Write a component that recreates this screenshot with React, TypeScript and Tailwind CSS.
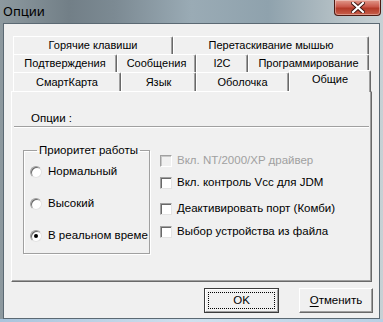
import React from 'react';

const font = "font-['Liberation_Sans',Arial,sans-serif]";

function Tab({ label, w, selected = false }: { label: string; w: number; selected?: boolean }) {
  return (
    <div
      style={{ width: w }}
      className={
        selected
          ? 'relative z-10 h-[22px] -mb-px flex items-start justify-center pt-[3px] bg-[#f0f0f0] border-t border-l border-white border-r border-r-[#696969] shadow-[inset_-1px_0_0_#a0a0a0] rounded-tr-[2px]'
          : 'h-full flex items-center justify-center bg-[#f0f0f0] border-t border-l border-white border-r border-r-[#696969] shadow-[inset_-1px_0_0_#a0a0a0] rounded-tr-[2px]'
      }
    >
      <span className="text-[11px] text-black leading-none">{label}</span>
    </div>
  );
}

function Radio({ label, checked = false }: { label: string; checked?: boolean }) {
  return (
    <div className="flex items-center h-[14px]">
      <span className="shrink-0 w-[12px] h-[12px] rounded-full bg-white border border-t-[#a0a0a0] border-l-[#a0a0a0] border-r-[#e3e3e3] border-b-[#e3e3e3] shadow-[inset_1px_1px_0_#696969] flex items-center justify-center">
        {checked && <span className="w-[4px] h-[4px] rounded-full bg-black" />}
      </span>
      <span className="ml-[6px] text-[11.5px] text-black whitespace-nowrap">{label}</span>
    </div>
  );
}

function Check({ label, disabled = false }: { label: string; disabled?: boolean }) {
  return (
    <div className="flex items-center h-[14px]">
      <span
        className={
          disabled
            ? 'shrink-0 w-[12px] h-[12px] bg-[#f0f0f0] border border-t-[#a0a0a0] border-l-[#a0a0a0] border-r-white border-b-white shadow-[inset_1px_1px_0_#c8c8c8]'
            : 'shrink-0 w-[12px] h-[12px] bg-white border border-t-[#a0a0a0] border-l-[#a0a0a0] border-r-[#e3e3e3] border-b-[#e3e3e3] shadow-[inset_1px_1px_0_#696969]'
        }
      />
      <span className={'ml-[5px] text-[11.5px] whitespace-nowrap ' + (disabled ? 'text-[#a0a0a0]' : 'text-black')}>
        {label}
      </span>
    </div>
  );
}

export default function App() {
  return (
    <div
      className={
        font +
        ' w-[383px] h-[322px] overflow-hidden flex flex-col bg-[linear-gradient(90deg,#8d999f_0%,#727f87_18%,#7c8a93_30%,#9aabb5_50%,#8fa2ad_70%,#b4c0c5_88%,#c7d1d5_100%)]'
      }
    >
      {/* title bar */}
      <div className="h-[23px] flex items-start justify-between shrink-0">
        <span className="ml-[3px] mt-[3px] text-[13px] leading-[16px] text-black font-['Noto_Sans',sans-serif]">
          Опции
        </span>
        <div className="mr-[2px] w-[47px] h-[16px] rounded-b-[4px] border border-t-0 border-[#4d1a12] bg-[linear-gradient(180deg,#e29a8c_0%,#c9584a_45%,#b33a28_55%,#c8604c_100%)] shadow-[inset_0_0_0_1px_rgba(255,255,255,0.35)] flex items-center justify-center">
          <svg width="14" height="11" viewBox="0 0 14 11">
            <path d="M2 1 L12 10 M12 1 L2 10" stroke="#3a1410" strokeWidth="4" strokeLinecap="square" />
            <path d="M2 1 L12 10 M12 1 L2 10" stroke="#ffffff" strokeWidth="2.2" strokeLinecap="square" />
          </svg>
        </div>
      </div>

      {/* client area */}
      <div className="mx-[3px] h-[296px] shrink-0 border border-[#5b6973] bg-[#f0f0f0] flex flex-col">
        {/* tabs */}
        <div className="pt-[12px] pl-[9px] flex flex-col">
          <div className="h-[18px] flex">
            <Tab label="Горячие клавиши" w={160} />
            <Tab label="Перетаскивание мышью" w={196} />
          </div>
          <div className="h-[18px] flex">
            <Tab label="Подтверждения" w={104} />
            <Tab label="Сообщения" w={79} />
            <Tab label="I2C" w={52} />
            <Tab label="Программирование" w={121} />
          </div>
          <div className="h-[19px] flex items-end">
            <Tab label="СмартКарта" w={108} />
            <Tab label="Язык" w={75} />
            <Tab label="Оболочка" w={93} />
            <Tab label="Общие" w={82} selected />
          </div>
        </div>

        {/* panel */}
        <div className="ml-[7px] w-[361px] h-[191px] border-t border-l border-white border-r border-b border-r-[#696969] border-b-[#696969] shadow-[inset_-1px_-1px_0_#a0a0a0] flex flex-col">
          <div className="pl-[19px] pt-[19px] text-[11.5px] leading-[14px] text-black">Опции :</div>
          <div className="mx-[2px] mt-[1px] border-t border-[#a0a0a0] border-b border-b-white" />

          <div className="flex mt-[15px] ml-[11px]">
            <fieldset className="w-[127px] h-[111px] border border-[#a0a0a0] shadow-[inset_1px_1px_0_#ffffff,1px_1px_0_#ffffff] pl-[6px]">
              <legend className="ml-[7px] px-[2px] text-[11.5px] leading-[14px] text-black">Приоритет работы</legend>
              <div className="flex flex-col gap-[18px] mt-[8px] overflow-hidden w-[118px]">
                <Radio label="Нормальный" />
                <Radio label="Высокий" />
                <Radio label="В реальном времени" checked />
              </div>
            </fieldset>

            <div className="ml-[10px] pt-[11px] flex flex-col">
              <Check label="Вкл. NT/2000/XP драйвер" disabled />
              <div className="h-[8px]" />
              <Check label="Вкл. контроль Vcc для JDM" />
              <div className="h-[12px]" />
              <Check label="Деактивировать порт (Комби)" />
              <div className="h-[9px]" />
              <Check label="Выбор устройства из файла" />
            </div>
          </div>
        </div>

        {/* buttons */}
        <div className="mt-[6px] mr-[6px] flex justify-end gap-[20px]">
          <button className="w-[75px] h-[25px] border border-[#3c3c3c] bg-[#f0f0f0] p-0">
            <div className="w-full h-full border-t border-l border-white border-r border-b border-r-[#a0a0a0] border-b-[#a0a0a0] p-[2px]">
              <div className="w-full h-full border border-dotted border-black flex items-center justify-center text-[11.5px] text-black">
                OK
              </div>
            </div>
          </button>
          <button className="w-[74px] h-[25px] border-t border-l border-white border-r border-b border-r-[#696969] border-b-[#696969] shadow-[inset_-1px_-1px_0_#a0a0a0] bg-[#f0f0f0] flex items-center justify-center text-[11.5px] text-black">
            <span>
              <span className="underline underline-offset-[2px]">О</span>тменить
            </span>
          </button>
        </div>
      </div>
      <div className="flex-1 bg-[linear-gradient(90deg,#a9c4dc,#cfe0ee,#b8d0e4)]" />
    </div>
  );
}
